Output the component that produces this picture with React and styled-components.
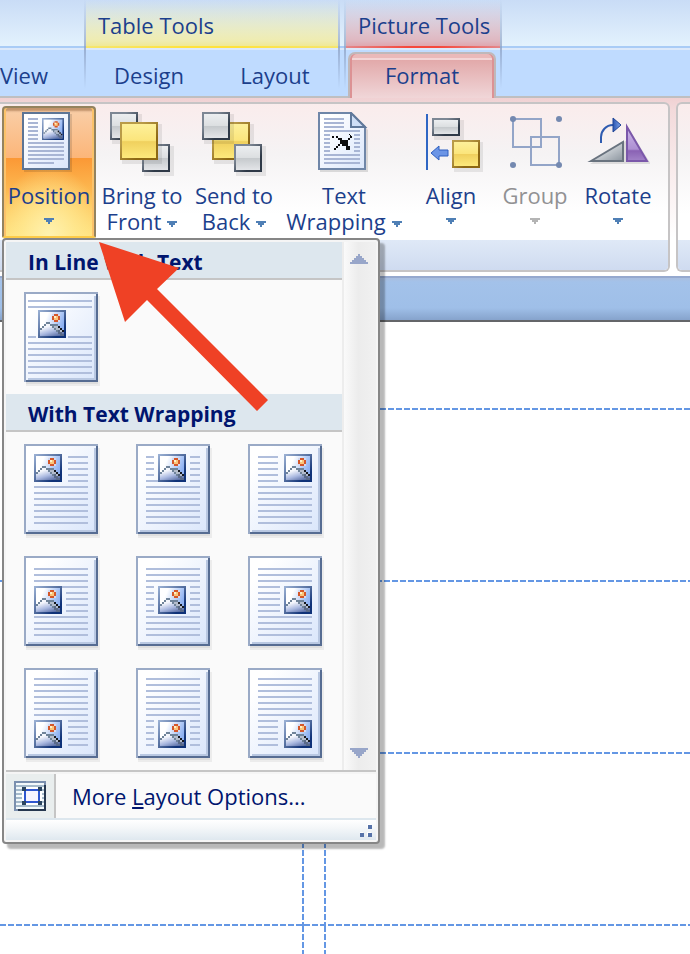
import React from "react";
import styled, { createGlobalStyle, css } from "styled-components";

const GlobalStyle = createGlobalStyle`
	*, *::before, *::after {
		box-sizing: border-box;
	}
	body {
		margin: 0;
		background: #fff;
		overflow-x: hidden;
	}
	button {
		font: inherit;
		color: inherit;
		background: none;
		border: none;
		padding: 0;
	}
	svg {
		display: block;
	}
`;

const Window = styled.div`
	position: relative;
	display: flex;
	flex-direction: column;
	min-height: 100vh;
	overflow: hidden;
	font-family: "Open Sans", "Noto Sans", sans-serif;
	font-size: 22px;
	line-height: 26px;
	color: #1c3f8c;
`;

/* ---------- tabs ---------- */

const TabStrip = styled.header`
	display: flex;
	border-bottom: 2px solid #bfbfc1;
	background: linear-gradient(
		#c9dcf6 0,
		#e3f2fd 46px,
		#a9ccf6 46px,
		#a9ccf6 48px,
		#dce9fa 48px,
		#dce9fa 50px,
		#bfdbff 50px
	);
`;

const TabGroup = styled.div`
	display: flex;
	flex-direction: column;
	width: ${({ width }) => width};
	margin-right: ${({ gap }) => gap || "0"};
	${({ framed }) =>
		framed &&
		css`
			border: solid transparent;
			border-width: 0 2px;
			border-image: linear-gradient(
					rgba(140, 160, 195, 0) 0,
					rgba(140, 160, 195, 0.75) 48px,
					rgba(140, 160, 195, 0) 88px
				)
				1;
			border-image-width: 0 2px;
		`};
`;

const tints = {
	yellow: css`
		background: linear-gradient(
				90deg,
				rgba(255, 226, 60, 0.4),
				#ffe23c 40%,
				#ffe23c 60%,
				rgba(255, 226, 60, 0.4)
			)
			bottom / 100% 2px no-repeat,
			linear-gradient(rgba(240, 236, 160, 0), #efecb0 85%, #efe78c);
	`,
	red: css`
		background: linear-gradient(
				90deg,
				rgba(240, 70, 60, 0.3),
				#f5483c 40%,
				#f5483c 60%,
				rgba(240, 70, 60, 0.3)
			)
			bottom / 100% 2px no-repeat,
			linear-gradient(rgba(224, 170, 180, 0), #dfb7c0 85%, #dfa0a8);
	`
};

const GroupTitle = styled.div`
	height: 48px;
	margin-bottom: 2px;
	padding: 12px 12px 0;
	white-space: nowrap;
	${({ tint }) => tints[tint]};
`;

const Tabs = styled.div`
	display: flex;
	height: 46px;
	justify-content: ${({ end }) => (end ? "flex-end" : "normal")};
	padding-right: ${({ end }) => (end ? "36px" : "0")};
`;

const Tab = styled.button`
	flex: ${({ fixed }) => (fixed ? "none" : "1")};
	padding-top: 4px;
	${({ selected }) =>
		selected &&
		css`
			margin: 2px 4px -2px 2px;
			padding: 0 0 2px;
			border: 2px solid #bfb8ba;
			border-bottom: none;
			border-radius: 7px 7px 0 0;
			background: linear-gradient(
				#eab9b9 0,
				#eab9b9 4px,
				#f3d5d6 4px,
				#f3d5d6 6px,
				#e2a9aa 6px,
				#f0d6d8
			);
			box-shadow: inset 2px 0 #dc9294, inset -2px 0 #dc9294;
		`};
`;

/* ---------- ribbon ---------- */

const RibbonBar = styled.div`
	display: flex;
	gap: 6px;
	padding: 4px 0;
	background: linear-gradient(#f0d1d3 0, #f3dadb 12px, #fff 140px);
`;

const Panel = styled.section`
	border: 2px solid #c6c4c5;
	border-left-width: ${({ first }) => (first ? "0" : "2px")};
	border-right-width: ${({ first }) => (first ? "2px" : "0")};
	border-radius: ${({ first }) => (first ? "0 6px 6px 0" : "6px 0 0 6px")};
	flex: ${({ first }) => (first ? "none" : "1")};
	display: flex;
	flex-direction: column;
	background: linear-gradient(#faecec, #f5f3f4 50px, #fff 110px);
`;

const PanelTools = styled.div`
	display: flex;
	height: 136px;
	padding: 2px 8px 2px 2px;
`;

const PanelFooter = styled.div`
	height: 30px;
	background: linear-gradient(#dfe9f7, #cfdbf0);
	border-radius: ${({ first }) => (first ? "0 0 4px 0" : "0 0 0 4px")};
`;

const ToolSlot = styled.div`
	position: relative;
	width: ${({ width }) => width};
`;

const ToolButton = styled.button`
	width: 100%;
	height: 132px;
	display: flex;
	flex-direction: column;
	align-items: center;
	gap: 6px;
	padding-top: 6px;
	color: ${({ disabled }) => (disabled ? "#919193" : "inherit")};
	${({ open }) =>
		open &&
		css`
			padding-top: 4px;
			border: 2px solid #94835f;
			border-bottom-color: #fdcb48;
			border-radius: 4px 4px 2px 2px;
			box-shadow: inset 2px 0 #fbc26a, inset -2px 0 #fbc26a,
				inset 0 3px 2px rgba(140, 90, 50, 0.5);
			background: radial-gradient(
					ellipse 60% 55% at 50% 100%,
					#fff2b0 0,
					rgba(255, 235, 150, 0.7) 50%,
					rgba(255, 210, 100, 0) 100%
				),
				linear-gradient(
					#f9cfa8 0,
					#fcb679 50px,
					#fb9835 50px,
					#fdc057 90px,
					#ffe27c
				);
		`};
`;

const ToolLabel = styled.span`
	display: block;
	text-align: center;
`;

const CaretIcon = styled.svg`
	display: ${({ below }) => (below ? "block" : "inline-block")};
	margin: ${({ below }) => (below ? "10px auto 0" : "0 0 0 6px")};
	vertical-align: 3px;
`;

const Caret = ({ below, disabled }) => (
	<CaretIcon
		below={below ? 1 : undefined}
		width="10"
		height="6"
		shapeRendering="crispEdges"
		aria-hidden="true"
	>
		<path
			d="M0 0h10v2H8v2H6v2H4V4H2V2H0z"
			fill={disabled ? "#b4b4b4" : "#4f7fb5"}
		/>
	</CaretIcon>
);

/* ---------- drop-down gallery ---------- */

const Menu = styled.div`
	position: absolute;
	top: 100%;
	left: 0;
	z-index: 2;
	width: 378px;
	border: 2px solid #868686;
	border-radius: 4px;
	padding: 2px;
	background: #f5f5f5;
	box-shadow: 5px 5px 2px rgba(0, 0, 0, 0.28);
	color: #00156e;
`;

const MenuBody = styled.div`
	display: flex;
	border-bottom: 2px solid #c5c5c5;
	background: #fafafa;
`;

const Gallery = styled.div`
	flex: 1;
`;

const Heading = styled.h2`
	margin: 0;
	height: 38px;
	padding: 7px 22px 0;
	font-size: 21px;
	line-height: 26px;
	font-weight: 700;
	background: #dde7ee;
	border-bottom: 2px solid #c5c5c5;
`;

const Thumbs = styled.div`
	display: grid;
	grid-template-columns: repeat(3, 76px);
	gap: 18px 36px;
	padding: 12px 18px 8px;
`;

const ScrollTrack = styled.div`
	display: flex;
	flex-direction: column;
	justify-content: space-between;
	width: 34px;
	border-left: 2px solid #ededed;
	background: linear-gradient(90deg, #fafafa, #ececec 45%, #f1f1f1);
`;

const ScrollButton = styled.button`
	display: flex;
	justify-content: center;
	padding: 12px 2px 12px 0;
`;

const MoreButton = styled.button`
	display: flex;
	align-items: center;
	width: 100%;
	height: 44px;
	margin-top: 2px;
	background: #fafafa;
	white-space: nowrap;
`;

const MoreIcon = styled.span`
	display: flex;
	align-items: center;
	justify-content: center;
	width: 50px;
	height: 44px;
	margin-right: 16px;
	background: #e9eeee;
	border-right: 2px solid #c5c5c5;
`;

const AccessKey = styled.span`
	text-decoration: underline;
	text-decoration-thickness: 2px;
	text-underline-offset: 2px;
`;

const Grip = styled.div`
	display: flex;
	justify-content: flex-end;
	align-items: flex-end;
	height: 22px;
	padding: 0 2px 2px 0;
	border-top: 2px solid #dde7ee;
	background: linear-gradient(#fff, #f4f7f9 40%, #dfe8ef);
`;

/* ---------- document ---------- */

const PageEdge = styled.div`
	height: 46px;
	border-bottom: 2px solid #646669;
	background: linear-gradient(
		#95a9cf 0,
		#95a9cf 2px,
		#a9bedf 2px,
		#a3c2ea 6px,
		#9fbfe8 32px,
		#86a3cc
	);
`;

const Page = styled.main`
	flex: 1;
	display: flex;
	flex-direction: column;
`;

const LabelRow = styled.div`
	display: flex;
	height: ${({ height }) => height};
	flex: ${({ height }) => (height ? "none" : "1")};
	background: repeating-linear-gradient(
			90deg,
			#6497e4 0,
			#6497e4 6px,
			#fff 6px,
			#fff 8px
		)
		bottom left ${({ shift }) => (shift ? "4px" : "0")} / 800% 2px no-repeat;
	${({ height }) => !height && "background: none;"};
`;

const LabelCell = styled.div`
	width: ${({ width }) => width};
	background: repeating-linear-gradient(
			#6497e4 0,
			#6497e4 6px,
			#fff 6px,
			#fff 8px
		)
		right / 2px 100% no-repeat;
`;

const Pointer = styled.svg`
	position: absolute;
	top: 242px;
	left: 99px;
	z-index: 3;
	pointer-events: none;
`;

/* ---------- drawings ---------- */

const Gradients = () => (
	<svg width="0" height="0" style={{ position: "absolute" }} aria-hidden="true">
		<defs>
			<linearGradient id="paper" x1="0" y1="0" x2="1" y2="1">
				<stop offset="0.15" stopColor="#fff" />
				<stop offset="1" stopColor="#dae6fb" />
			</linearGradient>
			<linearGradient id="photoEdge" x1="0" y1="0" x2="1" y2="1">
				<stop offset="0" stopColor="#9db3d6" />
				<stop offset="0.5" stopColor="#4f6a9c" />
				<stop offset="0.8" stopColor="#0f3278" />
			</linearGradient>
			<linearGradient id="sky" x1="0" y1="0" x2="1" y2="0.4">
				<stop offset="0.3" stopColor="#fff" />
				<stop offset="1" stopColor="#8fb2f2" />
			</linearGradient>
			<linearGradient id="hill" x1="0.2" y1="0" x2="0.8" y2="1">
				<stop offset="0.2" stopColor="#f4f6fc" />
				<stop offset="0.6" stopColor="#a9b8e0" />
				<stop offset="1" stopColor="#5468a0" />
			</linearGradient>
			<linearGradient id="gray" x1="0" y1="0" x2="0" y2="1">
				<stop offset="0" stopColor="#eceef0" />
				<stop offset="0.48" stopColor="#dcdfe1" />
				<stop offset="0.52" stopColor="#c6cacd" />
				<stop offset="1" stopColor="#e3e5e8" />
			</linearGradient>
			<linearGradient id="grayEdge" x1="0" y1="0" x2="1" y2="1">
				<stop offset="0.3" stopColor="#7d8794" />
				<stop offset="0.7" stopColor="#2e3947" />
			</linearGradient>
			<linearGradient id="gold" x1="0" y1="0" x2="0" y2="1">
				<stop offset="0" stopColor="#fdf09a" />
				<stop offset="0.48" stopColor="#fbe57c" />
				<stop offset="0.52" stopColor="#f0d05e" />
				<stop offset="1" stopColor="#fde97c" />
			</linearGradient>
			<linearGradient id="goldEdge" x1="0" y1="0" x2="1" y2="1">
				<stop offset="0.3" stopColor="#b99b48" />
				<stop offset="0.7" stopColor="#8c6714" />
			</linearGradient>
			<linearGradient id="slate" x1="0" y1="0" x2="1" y2="1">
				<stop offset="0.3" stopColor="#dfe3e6" />
				<stop offset="1" stopColor="#8b949e" />
			</linearGradient>
			<linearGradient id="violet" x1="0" y1="0" x2="0" y2="1">
				<stop offset="0" stopColor="#cdb8ea" />
				<stop offset="0.65" stopColor="#ad8fd2" />
				<stop offset="0.7" stopColor="#8a62b4" />
				<stop offset="1" stopColor="#a283c8" />
			</linearGradient>
			<linearGradient id="blue" x1="0" y1="0" x2="1" y2="0">
				<stop offset="0" stopColor="#2a55b0" />
				<stop offset="1" stopColor="#7fa6ee" />
			</linearGradient>
		</defs>
	</svg>
);

// Framed photo with a sun and two hills, on a 14 x 14 grid
const Photo = ({ x, y, scale = 1 }) => (
	<g transform={`translate(${x} ${y}) scale(${scale})`}>
		<path fill="url(#photoEdge)" d="M0 0h14v14H0z" />
		<path fill="url(#sky)" d="M1 1h12v12H1z" />
		<path
			fill="url(#hill)"
			d="M1 10h1V9h1V8h1V7h2v1h1v1h1V8h3v1h1v1h1v3H1z"
		/>
		<path
			fill="#5a6a88"
			d="M10 10h1v1h1v1h1v1h-2v-1h-1v-1H9v-1z"
		/>
		<path
			fill="#6f8399"
			d="M1 9h1v1H1zM2 8h1v1H2zM3 7h1v1H3zM4 6h2v1H4zM6 7h1v1H6zM7 8h1v1H7zM8 9h1v1H8zM9 10h1v1H9zM7 7h3v1H7z"
		/>
		<path fill="#b4bdcc" d="M8 8h2v1H8zM9 9h2v1H9zM11 10h1v1h-1z" />
		<path fill="#15181f" d="M10 8h1v1h-1zM11 9h1v1h-1zM12 10h1v1h-1z" />
		<path fill="#d5d9ee" d="M7 2h4v4H7z" />
		<path fill="#d4572a" d="M8 2h2v1h1v2h-1v1H8V5H7V3h1z" />
		<path fill="#fbc57a" d="M8 3h2v2H8z" />
		<path fill="#fff0c8" d="M8 3h1v1H8z" />
	</g>
);

// Each line is [y, x1, x2, x1, x2...] in cells of the 37 x 45 sheet
const Sheet = ({ lines, photo }) => (
	<svg
		width="76"
		height="94"
		viewBox="0 0 38 47"
		shapeRendering="crispEdges"
		aria-hidden="true"
	>
		<path fill="#ececec" d="M1 2h37v45H1z" />
		<path fill="#dedede" d="M1 2h36v44H1z" />
		<path fill="#9aaac6" d="M0 0h37v45H0z" />
		<path fill="#566c92" d="M36 1h1v44H1v-1h35z" />
		<path fill="url(#paper)" d="M1 1h35v43H1z" />
		<path fill="#b9c8e2" d="M35 2h1v42H2v-1h33z" />
		{lines.map(([y, ...xs]) => (
			<path
				key={y}
				fill="#b0bedc"
				d={
					`M${xs[0]} ${y}H${xs[1]}v1H${xs[0]}z` +
					(xs.length > 2 ? `M${xs[2]} ${y}H${xs[3]}v1H${xs[2]}z` : "")
				}
			/>
		))}
		<Photo x={photo[0]} y={photo[1]} />
	</svg>
);

const rows = (from, to, ...xs) => {
	const out = [];
	for (let y = from; y <= to; y += 3) out.push([y, ...xs]);
	return out;
};

const inlineSheet = {
	name: "In Line with Text",
	photo: [7, 9],
	lines: [...rows(4, 7, 2, 34), [22, 2, 6, 22, 34], ...rows(25, 40, 2, 34)]
};

const wrapSheets = [
	{
		name: "Top Left",
		photo: [5, 5],
		lines: [...rows(6, 18, 22, 32), ...rows(21, 39, 5, 32)]
	},
	{
		name: "Top Center",
		photo: [11, 5],
		lines: [
			...rows(6, 15, 5, 9, 27, 32),
			[18, 5, 11, 27, 32],
			...rows(21, 39, 5, 32)
		]
	},
	{
		name: "Top Right",
		photo: [18, 5],
		lines: [...rows(6, 18, 5, 15), ...rows(21, 39, 5, 32)]
	},
	{
		name: "Middle Left",
		photo: [5, 15],
		lines: [
			...rows(6, 12, 5, 32),
			[15, 19, 32],
			...rows(18, 27, 21, 32),
			...rows(30, 39, 5, 32)
		]
	},
	{
		name: "Middle Center",
		photo: [11, 15],
		lines: [
			...rows(6, 12, 5, 32),
			...rows(15, 27, 5, 9, 27, 32),
			...rows(30, 39, 5, 32)
		]
	},
	{
		name: "Middle Right",
		photo: [18, 15],
		lines: [
			...rows(6, 12, 5, 32),
			...rows(15, 27, 5, 16),
			...rows(30, 39, 5, 32)
		]
	},
	{
		name: "Bottom Left",
		photo: [5, 26],
		lines: [...rows(5, 23, 5, 32), ...rows(26, 38, 22, 32)]
	},
	{
		name: "Bottom Center",
		photo: [11, 26],
		lines: [...rows(5, 23, 5, 32), ...rows(26, 38, 5, 9, 27, 32)]
	},
	{
		name: "Bottom Right",
		photo: [18, 26],
		lines: [...rows(5, 23, 5, 32), ...rows(26, 38, 5, 15)]
	}
];

const Icon = ({ children }) => (
	<svg width="64" height="64" viewBox="0 0 64 64" aria-hidden="true">
		{children}
	</svg>
);

const Block = ({ x, y, w, h = w, color }) => (
	<g shapeRendering="crispEdges">
		<rect x={x + 2} y={y + 2} width={w + 2} height={h + 2} fill="#000" opacity="0.08" />
		<rect x={x} y={y} width={w} height={h} fill={`url(#${color}Edge)`} />
		<rect x={x + 2} y={y + 2} width={w - 4} height={h - 4} fill="#fff" />
		<rect x={x + 2} y={y + 2} width={w - 4} height={h - 4} fill={`url(#${color})`} />
	</g>
);

const PositionIcon = () => (
	<Icon>
		<g shapeRendering="crispEdges">
			<path fill="#000" opacity="0.12" d="M7 2h48v58H7z" />
			<path fill="#5d7595" d="M5 0h48v58H5z" />
			<path fill="url(#paper)" d="M7 2h44v54H7z" />
			<path
				stroke="#a8b5d4"
				strokeWidth="2"
				d="M11 7h10M11 11h10M11 15h10M11 19h10M11 23h10M11 27h10M11 31h36M11 35h36M11 39h36M11 43h36M11 47h36M11 51h26"
			/>
		</g>
		<Photo x={25} y={6} scale={1.57} />
	</Icon>
);

const BringIcon = () => (
	<Icon>
		<Block x={0} y={0} w={28} color="gray" />
		<Block x={32} y={32} w={28} color="gray" />
		<Block x={10} y={10} w={38} color="gold" />
	</Icon>
);

const SendIcon = () => (
	<Icon>
		<Block x={10} y={10} w={38} color="gold" />
		<Block x={0} y={0} w={28} color="gray" />
		<Block x={32} y={32} w={28} color="gray" />
	</Icon>
);

const WrapIcon = () => (
	<Icon>
		<path fill="#000" opacity="0.12" d="M8 2h34l14 16v42H8z" />
		<path
			fill="url(#paper)"
			stroke="#6f86a8"
			strokeWidth="2"
			d="M7 1h32l14 14v42H7z"
		/>
		<path fill="#cfdff6" stroke="#60799b" strokeWidth="2" d="M39 1v14h14z" />
		<path
			shapeRendering="crispEdges"
			stroke="#a8b5d4"
			strokeWidth="2"
			d="M12 7h20M12 11h20M12 15h20M12 19h36M12 23h6M42 23h6M12 27h6M42 27h6M12 31h6M42 31h6M12 35h6M42 35h6M12 39h6M42 39h6M12 43h36M12 47h36M12 51h36"
		/>
		<path
			shapeRendering="crispEdges"
			fill="#0c0c0e"
			d="M36 22h2v2h2v2h-2v2h-2v6h2v2h-2v2h-2v-4h-4v-2h-2v2h-2v2h-2v2h-2v-2h2v-2h2v-2h2v-4h-2v-2h-2v-2h2v2h4v2h6v-2h2v-2h2z"
		/>
		<path
			shapeRendering="crispEdges"
			fill="#0c0c0e"
			d="M20 24h2v2h-2zM36 36h2v2h-2zM22 36h2v2h-2z"
		/>
	</Icon>
);

const AlignIcon = () => (
	<Icon>
		<path shapeRendering="crispEdges" fill="#2f66c4" d="M7 2h2v56H7z" />
		<Block x={13} y={6} w={28} h={18} color="gray" />
		<Block x={33} y={28} w={28} color="gold" />
		<path
			fill="#6c95e6"
			stroke="#2f5fc0"
			strokeWidth="1"
			d="M12 41l8-7v4h9v6h-9v4z"
		/>
	</Icon>
);

const GroupIcon = () => (
	<Icon>
		<path
			shapeRendering="crispEdges"
			fill="none"
			stroke="#93a5c8"
			strokeWidth="2"
			d="M10 7h28v28H10zM28 25h28v28H28z"
		/>
		<g fill="#7489b0">
			<circle cx="10" cy="7" r="3" />
			<circle cx="56" cy="7" r="3" />
			<circle cx="10" cy="53" r="3" />
			<circle cx="56" cy="53" r="3" />
		</g>
	</Icon>
);

const RotateIcon = () => (
	<Icon>
		<path fill="#000" opacity="0.1" d="M4 52L41 28v24zM41 14v38h24z" />
		<path
			fill="url(#slate)"
			stroke="#69737f"
			strokeWidth="2"
			d="M5 49L37 30v19z"
		/>
		<path
			fill="url(#violet)"
			stroke="#7b58aa"
			strokeWidth="2"
			d="M41 15v34h20z"
		/>
		<path
			fill="none"
			stroke="#2f5cb0"
			strokeWidth="2"
			d="M15 31v-6c0-6 5-12 12-12"
		/>
		<path fill="url(#blue)" stroke="#1f4596" strokeWidth="1" d="M27 6l8 7-8 7z" />
	</Icon>
);

const LayoutIcon = () => (
	<svg width="32" height="30" shapeRendering="crispEdges" aria-hidden="true">
		<path fill="#7a8fae" d="M0 0h32v30H0z" />
		<path fill="#26374f" d="M30 4h2v26H4v-2h26z" />
		<path fill="#f3f9fb" d="M2 2h28v26H2z" />
		<path
			stroke="#a5bacb"
			strokeWidth="2"
			d="M2 5h28M2 9h28M2 13h28M2 17h28M2 21h28M2 25h28"
		/>
		<path fill="#fff" d="M8 6h20v18H8z" />
		<path fill="#f7f4ff" stroke="#2f56d0" strokeWidth="2" d="M11 9h14v12H11z" />
		<path fill="#2b4560" d="M8 6h4v4H8zM24 6h4v4h-4zM8 20h4v4H8zM24 20h4v4h-4z" />
	</svg>
);

const ScrollArrow = ({ down }) => (
	<svg width="18" height="10" shapeRendering="crispEdges" aria-hidden="true">
		<path
			fill="#98a6c9"
			d={
				down
					? "M0 0h18v2h-2v2h-2v2h-2v2h-2v2H8V8H6V6H4V4H2V2H0z"
					: "M8 0h2v2h2v2h2v2h2v2h2v2H0V8h2V6h2V4h2V2h2z"
			}
		/>
	</svg>
);

const GripDots = () => (
	<svg width="14" height="14" shapeRendering="crispEdges" aria-hidden="true">
		<path fill="#fff" d="M7 0h4v4H7zM-1 8h4v4h-4zM7 8h4v4H7z" />
		<path fill="#5672a8" d="M8 1h4v4H8zM0 9h4v4H0zM8 9h4v4H8z" />
	</svg>
);

/* ---------- page ---------- */

const tools = [
	{ label: "Position", width: "94px", icon: PositionIcon, open: true },
	{ label: "Bring to Front", width: "92px", icon: BringIcon, inline: true },
	{ label: "Send to Back", width: "92px", icon: SendIcon, inline: true },
	{ label: "Text Wrapping", width: "128px", icon: WrapIcon, inline: true },
	{ label: "Align", width: "86px", icon: AlignIcon },
	{ label: "Group", width: "82px", icon: GroupIcon, disabled: true },
	{ label: "Rotate", width: "84px", icon: RotateIcon }
];

const PositionMenu = () => (
	<Menu>
		<MenuBody>
			<Gallery>
				<Heading>In Line with Text</Heading>
				<Thumbs>
					<button aria-label={inlineSheet.name}>
						<Sheet {...inlineSheet} />
					</button>
				</Thumbs>
				<Heading>With Text Wrapping</Heading>
				<Thumbs>
					{wrapSheets.map(({ name, ...sheet }) => (
						<button key={name} aria-label={name}>
							<Sheet {...sheet} />
						</button>
					))}
				</Thumbs>
			</Gallery>
			<ScrollTrack>
				<ScrollButton aria-label="Scroll up">
					<ScrollArrow />
				</ScrollButton>
				<ScrollButton aria-label="Scroll down">
					<ScrollArrow down />
				</ScrollButton>
			</ScrollTrack>
		</MenuBody>
		<MoreButton>
			<MoreIcon>
				<LayoutIcon />
			</MoreIcon>
			<span>
				More <AccessKey>L</AccessKey>ayout Options...
			</span>
		</MoreButton>
		<Grip>
			<GripDots />
		</Grip>
	</Menu>
);

const Tool = ({ label, width, icon: ToolIcon, open, disabled, inline }) => (
	<ToolSlot width={width}>
		<ToolButton open={open} disabled={disabled}>
			<ToolIcon />
			<ToolLabel>
				{label}
				<Caret below={!inline} disabled={disabled} />
			</ToolLabel>
		</ToolButton>
		{open ? <PositionMenu /> : null}
	</ToolSlot>
);

const App = () => (
	<Window>
		<GlobalStyle />
		<Gradients />
		<TabStrip>
			<TabGroup width="84px">
				<GroupTitle />
				<Tabs end>
					<Tab fixed>View</Tab>
				</Tabs>
			</TabGroup>
			<TabGroup width="256px" gap="4px" framed>
				<GroupTitle tint="yellow">Table Tools</GroupTitle>
				<Tabs>
					<Tab>Design</Tab>
					<Tab>Layout</Tab>
				</Tabs>
			</TabGroup>
			<TabGroup width="158px" framed>
				<GroupTitle tint="red">Picture Tools</GroupTitle>
				<Tabs>
					<Tab selected>Format</Tab>
				</Tabs>
			</TabGroup>
		</TabStrip>
		<RibbonBar>
			<Panel first>
				<PanelTools>
					{tools.map(tool => (
						<Tool key={tool.label} {...tool} />
					))}
				</PanelTools>
				<PanelFooter first />
			</Panel>
			<Panel>
				<PanelTools />
				<PanelFooter />
			</Panel>
		</RibbonBar>
		<PageEdge />
		<Page>
			{["88px", "172px", "172px", "172px", null].map((height, i) => (
				<LabelRow key={i} height={height} shift={i % 2 === 0}>
					<LabelCell width="304px" />
					<LabelCell width="22px" />
				</LabelRow>
			))}
		</Page>
		<Pointer width="170" height="170" aria-hidden="true">
			<path
				fill="#ef4125"
				d="M0 0L80 26 58 47 169 158 158 169 48 58 26 80z"
			/>
		</Pointer>
	</Window>
);

export default App;
